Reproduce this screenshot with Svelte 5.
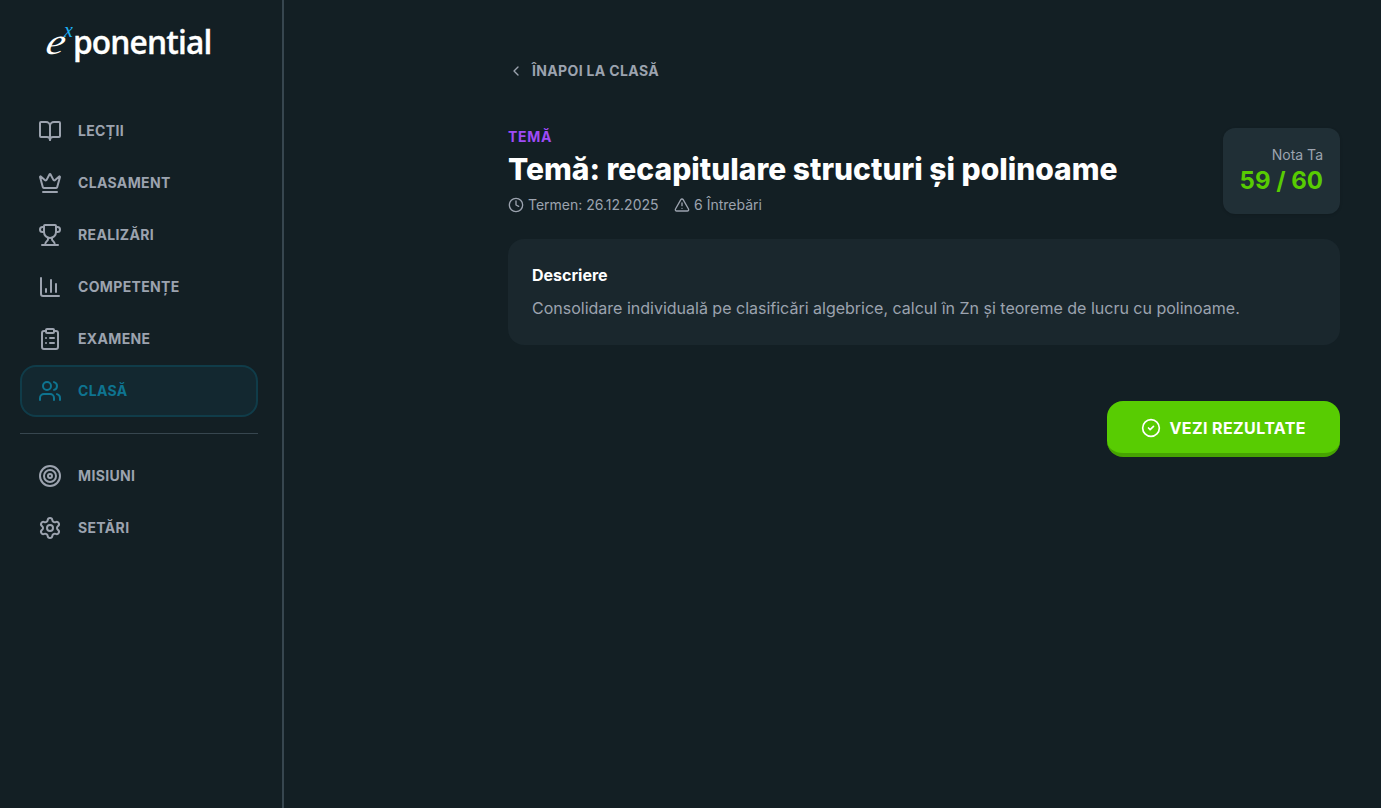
<script lang="ts">
    interface NavItem {
        label: string;
        icon: string;
        active?: boolean;
    }

    const mainItems: NavItem[] = [
        { label: 'Lecții', icon: 'book' },
        { label: 'Clasament', icon: 'crown' },
        { label: 'Realizări', icon: 'trophy' },
        { label: 'Competențe', icon: 'chart' },
        { label: 'Examene', icon: 'clipboard' },
        { label: 'Clasă', icon: 'users', active: true },
    ];

    const extraItems: NavItem[] = [
        { label: 'Misiuni', icon: 'target' },
        { label: 'Setări', icon: 'settings' },
    ];

    const icons: Record<string, string[]> = {
        book: [
            'M12 7v14',
            'M3 18a1 1 0 0 1-1-1V4a1 1 0 0 1 1-1h5a4 4 0 0 1 4 4 4 4 0 0 1 4-4h5a1 1 0 0 1 1 1v13a1 1 0 0 1-1 1h-6a3 3 0 0 0-3 3 3 3 0 0 0-3-3z',
        ],
        crown: [
            'M11.562 3.266a.5.5 0 0 1 .876 0L15.39 8.87a1 1 0 0 0 1.516.294L21.183 5.5a.5.5 0 0 1 .798.519l-2.834 10.246a1 1 0 0 1-.956.734H5.81a1 1 0 0 1-.957-.734L2.02 6.02a.5.5 0 0 1 .798-.519l4.276 3.664a1 1 0 0 0 1.516-.294z',
            'M5 21h14',
        ],
        trophy: [
            'M10 14.66v1.626a2 2 0 0 1-.976 1.696A5 5 0 0 0 7 21.978',
            'M14 14.66v1.626a2 2 0 0 0 .976 1.696A5 5 0 0 1 17 21.978',
            'M18 9h1.5a1 1 0 0 0 0-5H18',
            'M4 22h16',
            'M6 9a6 6 0 0 0 12 0V3a1 1 0 0 0-1-1H7a1 1 0 0 0-1 1z',
            'M6 9H4.5a1 1 0 0 1 0-5H6',
        ],
        chart: ['M3 3v16a2 2 0 0 0 2 2h16', 'M18 17V9', 'M13 17V5', 'M8 17v-3'],
        clipboard: [
            'M9 2h6a1 1 0 0 1 1 1v2a1 1 0 0 1-1 1H9a1 1 0 0 1-1-1V3a1 1 0 0 1 1-1z',
            'M16 4h2a2 2 0 0 1 2 2v14a2 2 0 0 1-2 2H6a2 2 0 0 1-2-2V6a2 2 0 0 1 2-2h2',
            'M12 11h4',
            'M12 16h4',
            'M8 11h.01',
            'M8 16h.01',
        ],
        users: [
            'M16 21v-2a4 4 0 0 0-4-4H6a4 4 0 0 0-4 4v2',
            'M16 3.128a4 4 0 0 1 0 7.744',
            'M22 21v-2a4 4 0 0 0-3-3.87',
            'M5 7a4 4 0 1 0 8 0a4 4 0 1 0-8 0',
        ],
        target: [
            'M2 12a10 10 0 1 0 20 0a10 10 0 1 0-20 0',
            'M6 12a6 6 0 1 0 12 0a6 6 0 1 0-12 0',
            'M10 12a2 2 0 1 0 4 0a2 2 0 1 0-4 0',
        ],
        settings: [
            'M9.671 4.136a2.34 2.34 0 0 1 4.659 0 2.34 2.34 0 0 0 3.319 1.915 2.34 2.34 0 0 1 2.33 4.033 2.34 2.34 0 0 0 0 3.831 2.34 2.34 0 0 1-2.33 4.033 2.34 2.34 0 0 0-3.319 1.915 2.34 2.34 0 0 1-4.659 0 2.34 2.34 0 0 0-3.32-1.915 2.34 2.34 0 0 1-2.33-4.033 2.34 2.34 0 0 0 0-3.831A2.34 2.34 0 0 1 6.35 6.051a2.34 2.34 0 0 0 3.319-1.915',
            'M9 12a3 3 0 1 0 6 0a3 3 0 1 0-6 0',
        ],
        back: ['m15 18-6-6 6-6'],
        clock: ['M2 12a10 10 0 1 0 20 0a10 10 0 1 0-20 0', 'M12 6v6l4 2'],
        alert: [
            'm21.73 18-8-14a2 2 0 0 0-3.48 0l-8 14A2 2 0 0 0 4 21h16a2 2 0 0 0 1.73-3',
            'M12 9v4',
            'M12 17h.01',
        ],
        check: ['M2 12a10 10 0 1 0 20 0a10 10 0 1 0-20 0', 'm9 12 2 2 4-4'],
    };

    const homework = {
        title: 'Temă: recapitulare structuri și polinoame',
        due: '26.12.2025',
        questions: 6,
        score: 59,
        maxScore: 60,
        description: 'Consolidare individuală pe clasificări algebrice, calcul în Zn și teoreme de lucru cu polinoame.',
    };
</script>

{#snippet icon(name: string, size: number)}
    <svg class="icon" width={size} height={size} viewBox="0 0 24 24">
        {#each icons[name] as d}
            <path {d} />
        {/each}
    </svg>
{/snippet}

{#snippet navList(items: NavItem[])}
    <ul class="nav-list">
        {#each items as item}
            <li class="nav-item" class:active={item.active}>
                {@render icon(item.icon, 24)}
                <span>{item.label}</span>
            </li>
        {/each}
    </ul>
{/snippet}

<div class="layout">
    <aside class="sidebar">
        <div class="logo"><span class="logo-e">e</span><sup class="logo-x">x</sup><span class="logo-rest">ponential</span></div>
        <nav>
            {@render navList(mainItems)}
            <hr class="divider" />
            {@render navList(extraItems)}
        </nav>
    </aside>

    <main class="content">
        <button class="back">
            {@render icon('back', 16)}
            <span>Înapoi la clasă</span>
        </button>

        <header class="header">
            <div>
                <div class="kind">Temă</div>
                <h1 class="title">{homework.title}</h1>
                <div class="meta">
                    <span class="meta-item">{@render icon('clock', 16)} Termen: {homework.due}</span>
                    <span class="meta-item">{@render icon('alert', 16)} {homework.questions} Întrebări</span>
                </div>
            </div>
            <div class="score">
                <div class="score-label">Nota Ta</div>
                <div class="score-value">{homework.score} / {homework.maxScore}</div>
            </div>
        </header>

        <section class="description">
            <h2>Descriere</h2>
            <p>{homework.description}</p>
        </section>

        <div class="actions">
            <button class="results">
                {@render icon('check', 20)}
                <span>Vezi rezultate</span>
            </button>
        </div>
    </main>
</div>

<style>
    :global(body) {
        background: #131f24;
    }

    .layout {
        display: flex;
        min-height: 100vh;
        font-family: Inter, "Liberation Sans", sans-serif;
        color: #fff;
        background: #131f24;
    }

    .layout, .layout * {
        box-sizing: border-box;
    }

    .icon {
        fill: none;
        stroke: currentColor;
        stroke-width: 2;
        stroke-linecap: round;
        stroke-linejoin: round;
        flex-shrink: 0;
    }

    button {
        font: inherit;
        border: none;
        cursor: pointer;
    }

    .sidebar {
        width: 284px;
        flex-shrink: 0;
        padding: 20px 24px 20px 20px;
        border-right: 2px solid #37464f;
    }

    .logo {
        display: flex;
        align-items: baseline;
        height: 85px;
        padding-left: 22px;
        line-height: 43px;
        white-space: nowrap;
    }

    .logo-e {
        font-family: "Liberation Serif", serif;
        font-style: italic;
        font-size: 37px;
        width: 22px;
        transform: skewX(-14deg) scaleX(1.12);
        transform-origin: left bottom;
    }

    .logo-x {
        position: relative;
        top: -17px;
        width: 9px;
        font-family: "Liberation Serif", serif;
        font-style: italic;
        font-size: 20px;
        line-height: 0;
        vertical-align: baseline;
        color: #1cb0f6;
    }

    .logo-rest {
        font-family: "Open Sans", "Noto Sans", sans-serif;
        font-size: 33px;
        font-weight: 600;
        letter-spacing: -0.9px;
        -webkit-text-stroke: 0.3px currentColor;
        transform: scaleX(0.96);
        transform-origin: left bottom;
    }

    .nav-list {
        list-style: none;
        margin: 0;
        padding: 0;
    }

    .nav-item {
        display: flex;
        align-items: center;
        gap: 16px;
        height: 52px;
        padding: 0 16px;
        border: 2px solid transparent;
        border-radius: 16px;
        font-size: 14px;
        line-height: 20px;
        font-weight: 700;
        letter-spacing: 0.35px;
        text-transform: uppercase;
        color: #9ca3af;
    }

    .nav-item.active {
        color: #0e7490;
        background: #132830;
        border-color: #103c49;
    }

    .divider {
        height: 1px;
        margin: 16px 0;
        border: none;
        background: #37464f;
    }

    .content {
        flex: 1;
        padding: 61px 41px 0 224px;
    }

    .back {
        display: flex;
        align-items: center;
        gap: 8px;
        padding: 0;
        margin-bottom: 46px;
        background: none;
        font-size: 14px;
        line-height: 20px;
        font-weight: 700;
        letter-spacing: 0.35px;
        text-transform: uppercase;
        color: #9ca3af;
    }

    .header {
        display: flex;
        justify-content: space-between;
        align-items: center;
        margin-bottom: 24px;
    }

    .kind {
        margin-bottom: 4px;
        font-size: 14px;
        line-height: 20px;
        font-weight: 700;
        letter-spacing: 0.7px;
        text-transform: uppercase;
        color: #9f4bf6;
    }

    .title {
        margin: 0 0 8px;
        font-size: 30px;
        line-height: 36px;
        font-weight: 800;
    }

    .meta {
        display: flex;
        gap: 15.5px;
        font-size: 14px;
        line-height: 20px;
        color: #9ca3af;
    }

    .meta-item {
        display: flex;
        align-items: center;
        gap: 4px;
    }

    .score {
        padding: 17px;
        border-radius: 12px;
        background: #202f36;
        text-align: right;
        box-shadow: 0 1px 3px rgba(0, 0, 0, 0.15);
    }

    .score-label {
        font-size: 14px;
        line-height: 20px;
        color: #9ca3af;
    }

    .score-value {
        font-size: 24px;
        line-height: 32px;
        font-weight: 700;
        color: #58cc02;
    }

    .description {
        padding: 24px;
        margin-bottom: 56px;
        border-radius: 16px;
        background: #1a272d;
    }

    .description h2 {
        margin: 0 0 8px;
        font-size: 16px;
        line-height: 24px;
        font-weight: 700;
    }

    .description p {
        margin: 0;
        font-size: 16px;
        line-height: 26px;
        color: #9ca3af;
    }

    .actions {
        display: flex;
        justify-content: flex-end;
    }

    .results {
        display: flex;
        align-items: center;
        gap: 8px;
        height: 56px;
        padding: 2px 34px 0;
        border-bottom: 4px solid #46a302;
        border-radius: 16px;
        background: #58cc02;
        font-size: 16px;
        font-weight: 700;
        letter-spacing: 0.4px;
        text-transform: uppercase;
        color: #fff;
    }
</style>
